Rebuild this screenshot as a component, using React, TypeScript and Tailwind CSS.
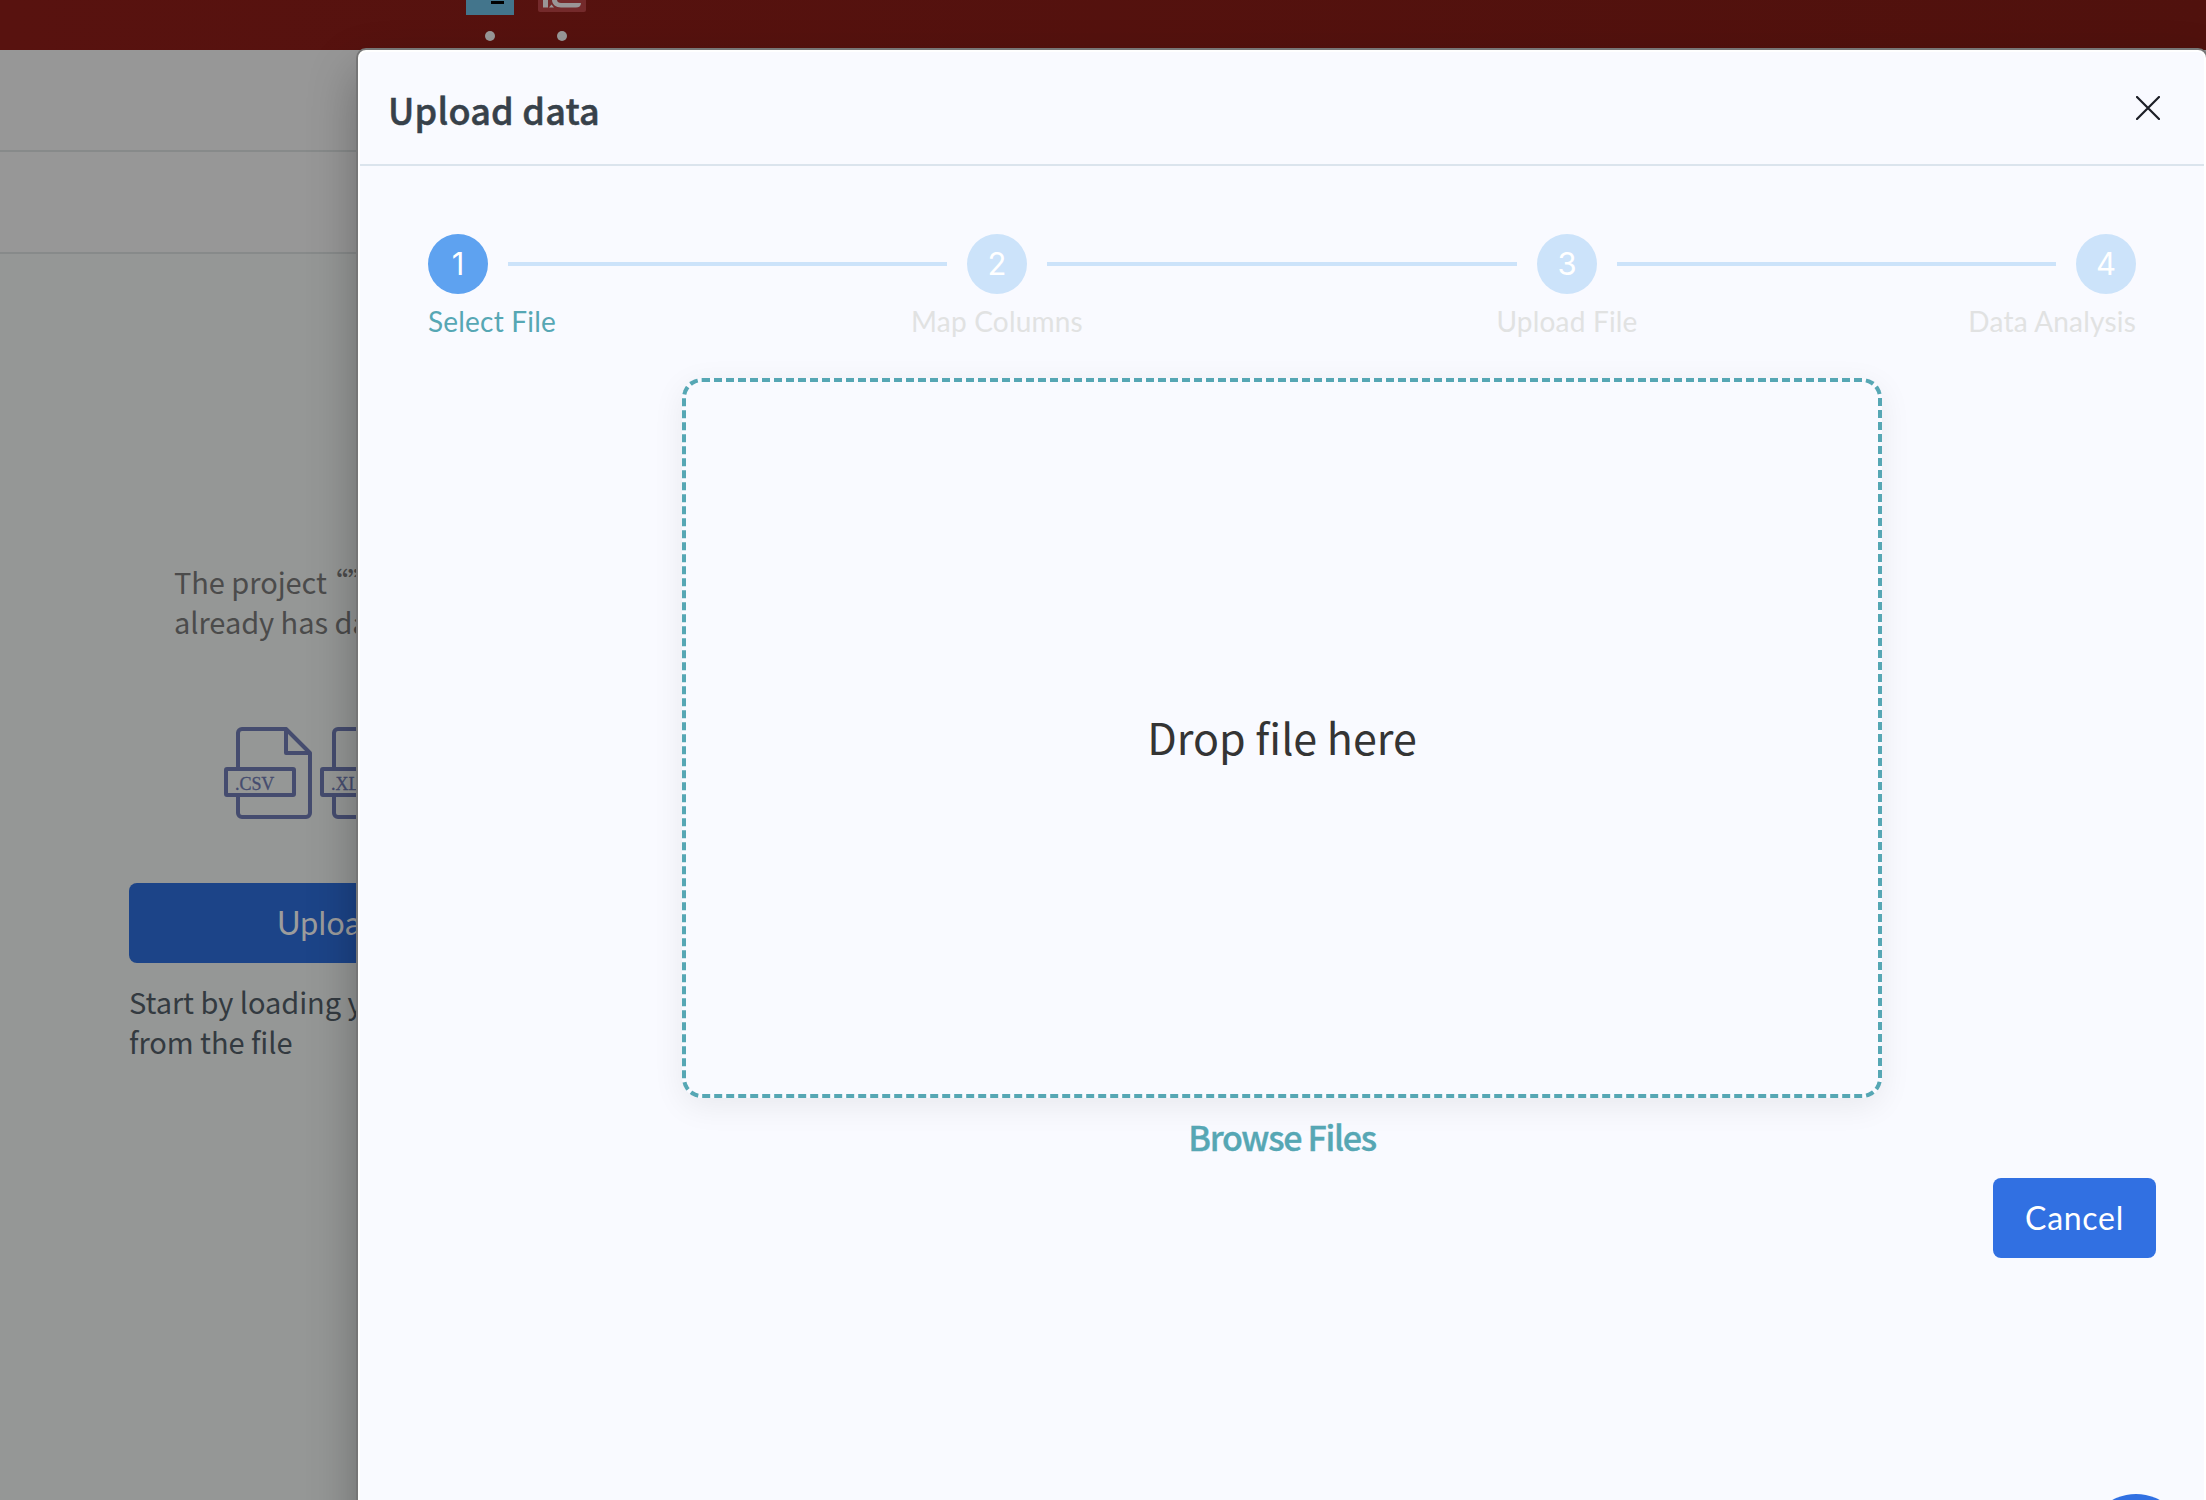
import { Fragment } from "react";

const steps = [
  { label: "Select File", active: true, align: "justify-start", line: "grow-[439]" },
  { label: "Map Columns", active: false, align: "justify-center", line: "grow-[470]" },
  { label: "Upload File", active: false, align: "justify-center", line: "grow-[439]" },
  { label: "Data Analysis", active: false, align: "justify-end", line: "" },
];

function FileIcon({ label }: { label: string }) {
  return (
    <svg className="h-[92px] w-[88px] shrink-0" viewBox="0 0 88 92" fill="none" stroke="#454c6f" strokeWidth="4" strokeLinejoin="round">
      <path d="M62 2H18a4 4 0 0 0-4 4v80a4 4 0 0 0 4 4h64a4 4 0 0 0 4-4V26L62 2v24h24" />
      <rect x="2" y="42" width="68" height="26" rx="1" fill="#959796" />
      <text x="11" y="62.500" fill="#454c6f" stroke="#454c6f" strokeWidth="0.300" fontSize="18" fontFamily="Liberation Serif, serif">
        {label}
      </text>
    </svg>
  );
}

function AppIcons() {
  return (
    <div className="flex gap-6 pl-[466px]">
      <div className="flex w-12 flex-col items-center">
        <svg className="h-[15px] w-12" viewBox="0 0 48 15">
          <rect width="48" height="15" fill="#43758c" />
          <rect x="25" y="1" width="13" height="3" fill="#000" />
        </svg>
        <div className="mt-4 size-[10px] rounded-full bg-[#989898]" />
      </div>
      <div className="flex w-12 flex-col items-center">
        <svg className="h-[15px] w-12" viewBox="0 0 48 15">
          <path d="M0 0h48v10a2 2 0 0 1-2 2H2a2 2 0 0 1-2-2z" fill="#742a2b" />
          <path d="M5 0h5v7.500H5zM11 7.500l2.500-3L16 7.500zM14 0h5c0 2 2 3 4 3h20c0 3-2 4.500-5 4.500H23c-5 0-9-3-9-7.500z" fill="#9a9697" />
        </svg>
        <div className="mt-4 size-[10px] rounded-full bg-[#989898]" />
      </div>
    </div>
  );
}

function Background() {
  return (
    <div className="flex h-full flex-col bg-[#959796]">
      <div className="h-[50px] shrink-0 bg-linear-to-r from-[#58120f] to-[#50110d]">
        <AppIcons />
      </div>
      <div className="h-[102px] shrink-0 border-b-2 border-[#878a8a] bg-[#979797]" />
      <div className="h-[102px] shrink-0 border-b-2 border-[#878a8a] bg-[#979797]" />
      <div className="ml-[129px] flex w-[480px] flex-col pt-[307px] font-['Noto_Sans_CJK_SC',sans-serif] text-[29px] leading-10 tracking-[-0.050px]">
        <p className="pl-[45px] text-[#4b4b4b]">
          The project <span className="[font-feature-settings:'palt']">“”</span>
          <br />
          already has data
        </p>
        <div className="mt-[86px] flex gap-2 pl-[95px]">
          <FileIcon label=".CSV" />
          <FileIcon label=".XLS" />
        </div>
        <button className="mt-16 h-20 rounded-lg bg-[#1c4488] pb-[1px] pl-[148px] text-left font-[Lato,sans-serif] text-[32px] tracking-[0.3px] text-[#9c9c9c]">
          Upload data
        </button>
        <p className="mt-[18px] text-[#333a40]">
          Start by loading your data
          <br />
          from the file
        </p>
      </div>
    </div>
  );
}

function Stepper() {
  return (
    <div className="flex items-start">
      {steps.map((s, i) => (
        <Fragment key={s.label}>
          <div className="flex w-[60px] shrink-0 flex-col">
            <div
              className={`flex size-[60px] items-center justify-center rounded-full font-[Inter,sans-serif] text-[31px] text-white ${s.active ? "bg-[#5ea2f0]" : "bg-[#cce3fa]"}`}
            >
              {i + 1}
            </div>
            <div
              className={`mt-[9px] flex font-[Lato,sans-serif] text-[28px] leading-9 tracking-[0.2px] whitespace-nowrap ${s.align} ${s.active ? "text-[#56a7b4]" : "text-[#e1e2e2]"}`}
            >
              {s.label}
            </div>
          </div>
          {s.line && <div className={`mx-5 mt-7 h-1 basis-0 bg-[#cce3fa] ${s.line}`} />}
        </Fragment>
      ))}
    </div>
  );
}

function UploadDialog() {
  return (
    <div className="absolute top-[50px] right-0 left-[358px] h-[1600px] rounded-t-lg border-2 border-white bg-[#f9faff] font-['Noto_Sans_CJK_SC',sans-serif] shadow-[0_0_0_2px_#767676,0_22px_50px_rgba(0,0,0,0.3)]">
      <header className="flex h-[114px] items-center justify-between border-b-2 border-[#dbe4ed] pr-[44px] pl-7">
        <h1 className="pt-px text-[36px] font-medium tracking-[0.2px] text-[#37414a] [-webkit-text-stroke:0.5px_#37414a]">Upload data</h1>
        <svg className="size-6" viewBox="0 0 24 24" stroke="#1c1e26" strokeWidth="2.200" strokeLinecap="round">
          <path d="M1 1l22 22M23 1L1 23" />
        </svg>
      </header>
      <div className="pt-[68px] pr-[68px] pl-[68px]">
        <Stepper />
      </div>
      <div className="ml-[322px] flex w-[1200px] flex-col items-center pt-[39px]">
        <div className="flex h-[720px] w-full items-center justify-center rounded-[20px] border-4 border-dashed border-[#56a7b4] bg-[#f9faff] pb-1 text-[43px] text-[#343434] shadow-[0_8px_32px_rgba(0,0,0,0.07)]">
          Drop file here
        </div>
        <button className="mt-[15px] text-[34px] leading-[48px] font-medium tracking-[-1.300px] text-[#56a7b4] [-webkit-text-stroke:0.4px_#56a7b4]">
          Browse Files
        </button>
      </div>
      <div className="mt-[17px] flex justify-end pr-12">
        <button className="h-20 w-[163px] rounded-lg bg-[#3170e2] font-[Lato,sans-serif] text-[32px] tracking-[0.7px] text-white">Cancel</button>
      </div>
    </div>
  );
}

export default function App() {
  return (
    <div className="relative h-[1500px] w-full overflow-hidden">
      <Background />
      <UploadDialog />
      <div className="absolute top-[1494px] right-[20px] size-[100px] rounded-full bg-[#3170e2]" />
    </div>
  );
}
